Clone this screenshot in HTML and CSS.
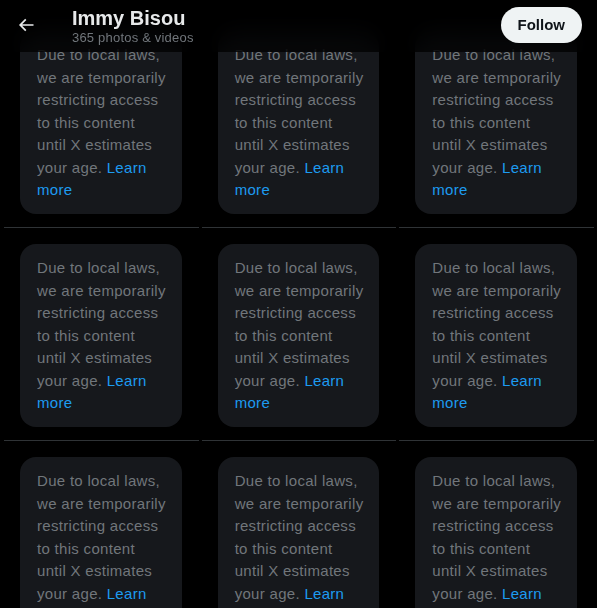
FILE: index.html
```html
<!DOCTYPE html>
<html lang="en">
<head>
<meta charset="utf-8">
<title>Immy Bisou - photos &amp; videos</title>
<link rel="stylesheet" href="styles.css">
</head>
<body>
<div class="page">
  <header class="topbar">
    <div class="back">
      <svg viewBox="0 0 24 24" width="20" height="20" aria-hidden="true"><path fill="#e7e9ea" d="M7.414 13l5.043 5.04-1.414 1.42L3.586 12l7.457-7.46 1.414 1.42L7.414 11H21v2H7.414z"/></svg>
    </div>
    <div class="titles">
      <div class="name">Immy Bisou</div>
      <div class="count">365 photos &amp; videos</div>
    </div>
    <button class="follow">Follow</button>
  </header>

  <main class="grid">
    <div class="cell"><div class="card">Due to local laws, we are temporarily restricting access to this content until X estimates your age. <a href="#">Learn more</a></div></div>
    <div class="cell"><div class="card">Due to local laws, we are temporarily restricting access to this content until X estimates your age. <a href="#">Learn more</a></div></div>
    <div class="cell"><div class="card">Due to local laws, we are temporarily restricting access to this content until X estimates your age. <a href="#">Learn more</a></div></div>
    <div class="cell"><div class="card">Due to local laws, we are temporarily restricting access to this content until X estimates your age. <a href="#">Learn more</a></div></div>
    <div class="cell"><div class="card">Due to local laws, we are temporarily restricting access to this content until X estimates your age. <a href="#">Learn more</a></div></div>
    <div class="cell"><div class="card">Due to local laws, we are temporarily restricting access to this content until X estimates your age. <a href="#">Learn more</a></div></div>
    <div class="cell"><div class="card">Due to local laws, we are temporarily restricting access to this content until X estimates your age. <a href="#">Learn more</a></div></div>
    <div class="cell"><div class="card">Due to local laws, we are temporarily restricting access to this content until X estimates your age. <a href="#">Learn more</a></div></div>
    <div class="cell"><div class="card">Due to local laws, we are temporarily restricting access to this content until X estimates your age. <a href="#">Learn more</a></div></div>
  </main>
</div>
</body>
</html>
```

FILE: styles.css
```css
html, body {
  margin: 0;
  padding: 0;
  background: #000;
  height: 100%;
  overflow: hidden;
}
body {
  font-family: "Liberation Sans", Arial, sans-serif;
  color: #e7e9ea;
}
.page {
  position: relative;
  width: 597px;
  height: 608px;
  overflow: hidden;
}
.topbar {
  position: absolute;
  top: 0;
  left: 0;
  right: 0;
  height: 52px;
  z-index: 2;
  display: flex;
  align-items: center;
  padding: 0 15px 0 16px;
  background: rgba(0, 0, 0, 0.7);
  backdrop-filter: blur(12px);
}
.back {
  width: 56px;
  height: 20px;
  display: flex;
  align-items: center;
  margin-top: -2px;
}
.titles {
  display: flex;
  flex-direction: column;
}
.name {
  font-size: 20px;
  font-weight: 700;
  line-height: 24px;
  color: #e7e9ea;
}
.count {
  font-size: 13px;
  line-height: 16px;
  color: #71767b;
  letter-spacing: 0.2px;
}
.follow {
  margin-left: auto;
  margin-top: -3px;
  height: 36px;
  padding: 0 17px;
  border: none;
  border-radius: 9999px;
  background: #eff3f4;
  color: #0f1419;
  font-family: "Liberation Sans", Arial, sans-serif;
  font-size: 15px;
  font-weight: 700;
}
.grid {
  display: grid;
  grid-template-columns: repeat(3, 1fr);
  column-gap: 3px;
  padding: 0 3px 0 4px;
  margin-top: 15px;
}
.cell {
  padding: 16px 17px 13px 16px;
  border-bottom: 1px solid #2f3336;
}
.card {
  height: 183px;
  box-sizing: border-box;
  padding: 13px 14px 11px 17px;
  border-radius: 16px;
  background: #16181c;
  color: #71767b;
  font-size: 15px;
  line-height: 22.5px;
  letter-spacing: 0.3px;
}
.card a {
  color: #1d9bf0;
  text-decoration: none;
}
```
